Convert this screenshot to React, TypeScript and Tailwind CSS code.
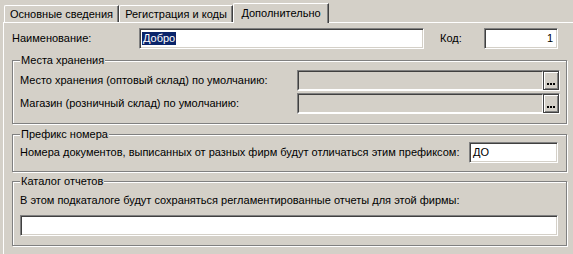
import React from "react";

function Group({
  title,
  className,
  children,
}: {
  title: string;
  className: string;
  children: React.ReactNode;
}) {
  return (
    <div
      className={
        "relative w-[555px] border border-[#808080] shadow-[inset_1px_1px_0_#ffffff,1px_1px_0_#ffffff] " +
        className
      }
    >
      <span className="absolute left-[7px] top-[-7px] bg-[#d4d0c8] px-[1px] leading-[13px]">
        {title}
      </span>
      {children}
    </div>
  );
}

function Picker({ width }: { width: string }) {
  return (
    <div
      className={
        "flex h-[21px] border border-t-[#808080] border-l-[#808080] border-b-white border-r-white " +
        width
      }
    >
      <div className="flex-1 border border-t-[#404040] border-l-[#404040] border-b-white border-r-white bg-[#d4d0c8]" />
      <div className="flex w-[16px] items-end justify-center gap-[1px] border border-[#404040] bg-[#d4d0c8] pb-[4px] shadow-[inset_1px_1px_0_#ffffff,inset_-1px_-1px_0_#808080]">
        <div className="h-[2px] w-[2px] bg-black" />
        <div className="h-[2px] w-[2px] bg-black" />
        <div className="h-[2px] w-[2px] bg-black" />
      </div>
    </div>
  );
}

export default function App() {
  return (
    <div className="h-[254px] w-[573px] overflow-hidden bg-[#d4d0c8] font-['Liberation_Sans',Arial,sans-serif] text-[11px] leading-[13px] text-black">
      {/* tabs */}
      <div className="flex h-[22px] items-end pl-[4px]">
        <div className="flex h-[17px] w-[115px] items-center justify-center rounded-tl-[2px] border-l border-t border-r border-l-white border-t-white border-r-[#404040] shadow-[inset_-1px_0_0_#808080]">
          Основные сведения
        </div>
        <div className="flex h-[17px] w-[114px] items-center justify-center rounded-tl-[2px] border-l border-t border-r border-l-white border-t-white border-r-[#404040] shadow-[inset_-1px_0_0_#808080]">
          Регистрация и коды
        </div>
        <div className="relative z-10 mb-[-1px] flex h-[20px] w-[96px] items-start justify-center rounded-tl-[2px] border-l border-t border-r border-l-white border-t-white border-r-[#404040] bg-[#d4d0c8] pt-[3px] shadow-[inset_-1px_0_0_#808080]">
          Дополнительно
        </div>
      </div>

      {/* panel */}
      <div className="ml-[3px] h-[300px] w-[600px] border-l border-t border-white pl-[8px] pt-[5px]">
        {/* row 1 */}
        <div className="flex h-[21px] items-center">
          <div className="w-[127px]">Наименование:</div>
          <div className="flex h-[21px] w-[285px] items-center border border-t-[#808080] border-l-[#808080] border-b-white border-r-white bg-white pl-[2px] shadow-[inset_1px_1px_0_#404040,inset_-1px_-1px_0_#d4d0c8]">
            <span className="bg-[#0a246a] px-[1px] text-white">Добро</span>
          </div>
          <div className="ml-[16px] w-[44px]">Код:</div>
          <div className="flex h-[21px] w-[74px] items-center justify-end border border-t-[#808080] border-l-[#808080] border-b-white border-r-white bg-white pr-[4px] shadow-[inset_1px_1px_0_#404040,inset_-1px_-1px_0_#d4d0c8]">
            1
          </div>
        </div>

        {/* group 1 */}
        <Group title="Места хранения" className="mt-[11px] flex flex-col gap-[2px] pb-[9px] pl-[7px] pt-[9px]">
          <div className="flex h-[21px] items-center">
            <div className="w-[277px]">Место хранения (оптовый склад) по умолчанию:</div>
            <Picker width="w-[263px]" />
          </div>
          <div className="flex h-[21px] items-center">
            <div className="w-[277px]">Магазин (розничный склад) по умолчанию:</div>
            <Picker width="w-[263px]" />
          </div>
        </Group>

        {/* group 2 */}
        <Group title="Префикс номера" className="mt-[10px] pb-[8px] pl-[7px] pt-[7px]">
          <div className="flex h-[21px] items-center">
            <div className="w-[449px]">
              Номера документов, выписанных от разных фирм будут отличаться этим префиксом:
            </div>
            <div className="flex h-[21px] w-[89px] items-center border border-t-[#808080] border-l-[#808080] border-b-white border-r-white bg-white pl-[3px] shadow-[inset_1px_1px_0_#404040,inset_-1px_-1px_0_#d4d0c8]">
              ДО
            </div>
          </div>
        </Group>

        {/* group 3 */}
        <Group title="Каталог отчетов" className="mt-[9px] flex flex-col pb-[9px] pl-[7px] pt-[12px]">
          <div className="h-[13px]">
            В этом подкаталоге будут сохраняться регламентированные отчеты для этой фирмы:
          </div>
          <div className="mt-[8px] h-[21px] w-[538px] border border-t-[#808080] border-l-[#808080] border-b-white border-r-white bg-white shadow-[inset_1px_1px_0_#404040,inset_-1px_-1px_0_#d4d0c8]" />
        </Group>
      </div>
    </div>
  );
}
